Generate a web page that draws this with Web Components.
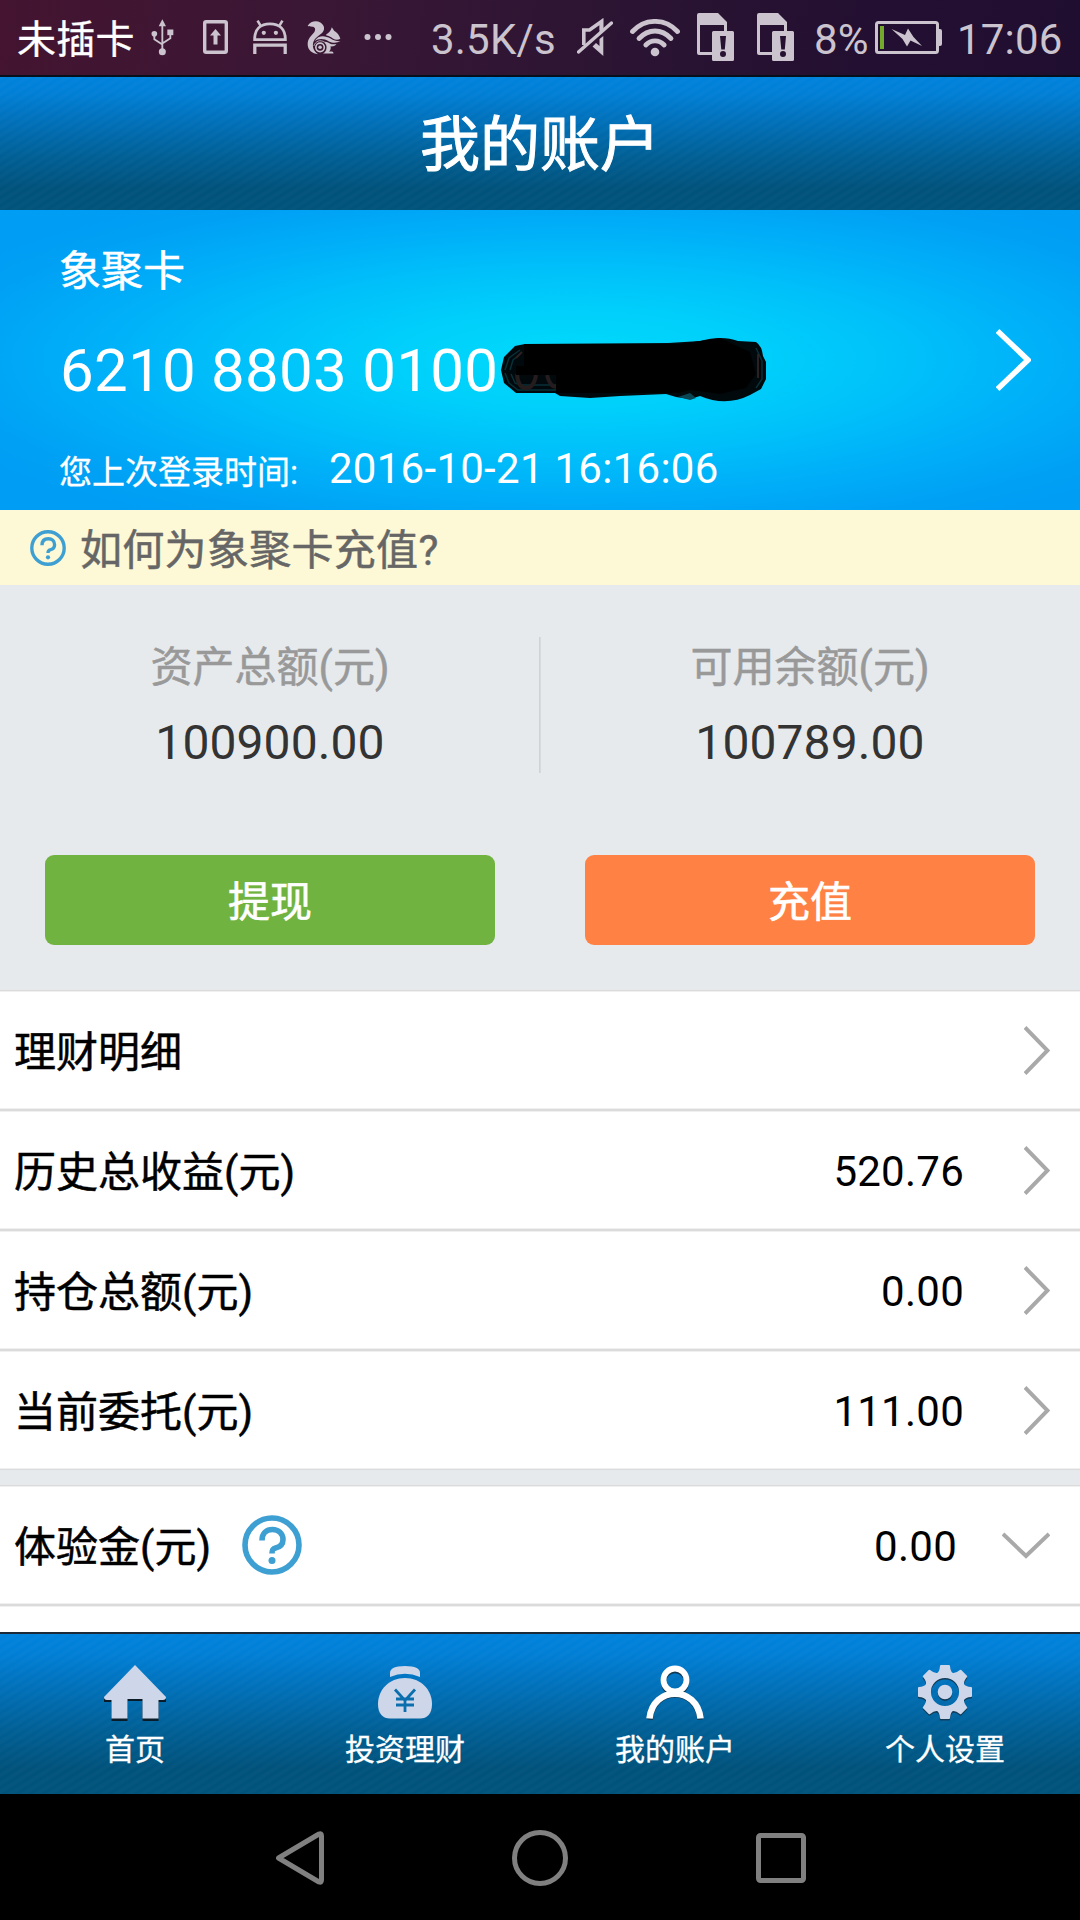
<!DOCTYPE html>
<html lang="zh-CN">
<head>
<meta charset="UTF-8">
<title>我的账户</title>
<style>
  html, body { margin: 0; padding: 0; }
  body {
    width: 1080px;
    height: 1920px;
    overflow: hidden;
    font-family: Roboto, "Noto Sans CJK SC", sans-serif;
    background: #e6eaed;
    --bar-bg:
      repeating-linear-gradient(var(--stripe-angle, 148deg), rgba(255,255,255,.02) 0 2px, rgba(255,255,255,0) 4px 5px, rgba(255,255,255,.02) 7px),
      linear-gradient(#0082dc 0, #007fd6 12%, #0071bb 32%, #005f95 60%, #00527b 84%, #00537b 100%);
  }
</style>
</head>
<body>
<app-screen>
  <status-bar carrier="未插卡" speed="3.5K/s" battery="8%" time="17:06"></status-bar>
  <title-bar>我的账户</title-bar>
  <account-card name="象聚卡" number="6210 8803 0100" label="您上次登录时间:" time="2016-10-21 16:16:06"></account-card>
  <tip-bar>如何为象聚卡充值?</tip-bar>
  <balance-panel>
    <balance-item label="资产总额(元)">100900.00</balance-item>
    <balance-item label="可用余额(元)">100789.00</balance-item>
    <action-button slot="actions" color="#71b340">提现</action-button>
    <action-button slot="actions" color="#ff8144">充值</action-button>
  </balance-panel>
  <list-group>
    <list-row label="理财明细"></list-row>
    <list-row label="历史总收益(元)">520.76</list-row>
    <list-row label="持仓总额(元)">0.00</list-row>
    <list-row label="当前委托(元)">111.00</list-row>
  </list-group>
  <list-group last>
    <list-row label="体验金(元)" help expand>0.00</list-row>
    <list-row label=""></list-row>
  </list-group>
  <tab-bar slot="footer">
    <tab-item icon="home">首页</tab-item>
    <tab-item icon="bag">投资理财</tab-item>
    <tab-item icon="user">我的账户</tab-item>
    <tab-item icon="gear">个人设置</tab-item>
  </tab-bar>
  <nav-bar slot="footer"></nav-bar>
</app-screen>

<script>
(function () {
  'use strict';

  function define(name, template) {
    customElements.define(name, class extends HTMLElement {
      constructor() {
        super();
        this.attachShadow({ mode: 'open' });
      }

      connectedCallback() {
        this.shadowRoot.innerHTML = template(this);
      }
    });
  }

  const attr = (el, name) => el.getAttribute(name) || '';

  const HELP = `
    <svg viewBox="0 0 60 60" fill="none" stroke="#3d9fd2">
      <circle cx="30" cy="30" r="27" stroke-width="5.600"/>
      <path d="M20 25.5C20 18 24.500 14.500 30.500 14.500S41 18.500 41 24.500c0 5.500-3 7.500-7.500 8.500-2.500.6-3.500 1.500-3.500 5.500" stroke-width="5.600"/>
      <circle cx="30" cy="45.500" r="3.500" fill="#3d9fd2" stroke="none"/>
    </svg>`;

  // status bar glyphs
  const USB = `
    <svg class="usb" viewBox="32 38 69 110" fill="#cbc3cd" stroke="#cbc3cd">
      <path d="M66 38L77 59H55Z" stroke="none"/>
      <path d="M66 55V136M42 84V98L66 114M90 80V95L66 111" fill="none" stroke-width="5.500"/>
      <circle cx="42" cy="82" r="8.500" stroke="none"/>
      <path d="M81 69H99V86H81Z" stroke="none"/>
      <circle cx="66" cy="136" r="10.500" stroke="none"/>
    </svg>`;

  const UPLOAD = `
    <svg class="upload" viewBox="0 0 25 34" fill="none" stroke="#cbc3cd">
      <rect x="1.700" y="1.700" width="21.600" height="30.600" rx="1.500" stroke-width="3.400"/>
      <path d="M12.500 9L18 15.500H14.500V24.500H10.500V15.500H7Z" fill="#cbc3cd" stroke="none"/>
    </svg>`;

  const DROID = `
    <svg class="droid" viewBox="339 40 102 104" fill="none" stroke="#cbc3cd" stroke-width="8.500">
      <path d="M343 100C343 68 361 52 390 52S437 68 437 100Z"/>
      <path d="M361 57L352 42M419 57L428 42" stroke-width="8"/>
      <path d="M343.500 144V117H436.500V144" stroke-width="10"/>
      <circle cx="371" cy="79" r="6.500" fill="#cbc3cd" stroke="none"/>
      <circle cx="408" cy="79" r="6.500" fill="#cbc3cd" stroke="none"/>
    </svg>`;

  const SQUIRREL = `
    <svg class="squirrel" viewBox="500 41 104 104" fill="#cbc3cd">
      <path d="M502 57C511 43 528 40 541 47C555 56 555 70 546 79C533 90 519 96 518 116C518 130 526 139 534 144C516 143 502 132 502 114C502 95 514 88 522 77C528 67 524 60 516 60C510 59 506 59 502 57Z"/>
      <path d="M559 83C566 80 573 74 576 62L583 72C592 77 599 86 602 97C595 101 587 101 579 96C572 91 566 88 559 87Z"/>
      <path d="M523 104C535 84 556 87 572 96C582 102 592 105 602 104C592 111 577 110 567 105C550 95 535 96 523 104Z"/>
      <path d="M553 106C561 105 566 110 573 113C580 115 585 113 590 113C585 120 577 121 572 120C574 128 571 134 567 136H576C579 136 581 139 581 142H549C562 136 566 119 553 106Z"/>
      <circle cx="540" cy="123" r="13" fill="none" stroke="#cbc3cd" stroke-width="5"/>
      <circle cx="540" cy="123" r="5.500"/>
      <path d="M521 119C526 103 541 99 553 107C562 114 564 127 557 136" fill="none" stroke="#cbc3cd" stroke-width="2.500"/>
    </svg>`;

  const DOTS = `
    <svg class="dots" viewBox="0 0 28 8" fill="#cbc3cd">
      <circle cx="3.500" cy="4" r="3"/><circle cx="14" cy="4" r="3"/><circle cx="24.500" cy="4" r="3"/>
    </svg>`;

  const MUTE = `
    <svg class="mute" viewBox="0 0 36 38" fill="none" stroke="#cbc3cd">
      <path d="M6.800 27V12H12.500L24.500 3.500V12" stroke-width="3.600"/>
      <path d="M26.300 18V38L15.500 28.500L19 25L22.500 28V21Z" fill="#cbc3cd" stroke="none"/>
      <path d="M26.300 0V12L22.500 15V7Z" fill="#cbc3cd" stroke="none"/>
      <path d="M1.500 34L34.500 5" stroke-width="3.400" stroke-linecap="round"/>
    </svg>`;

  const WIFI = `
    <svg class="wifi" viewBox="0 0 50 38" fill="none" stroke="#cbc3cd" stroke-width="4.800" stroke-linecap="round">
      <path d="M2.500 12.500C15-1 35-1 47.500 12.500"/>
      <path d="M9 19.500C18.500 9.500 31.500 9.500 41 19.500"/>
      <path d="M15.800 26C21 20.500 29 20.500 34.200 26"/>
      <circle cx="25" cy="33" r="4.300" fill="#cbc3cd" stroke="none"/>
    </svg>`;

  const SIM = `
    <svg class="sim" viewBox="0 0 37 48" fill="#cbc3cd">
      <path d="M2 0H21L30 9V18H27V12H3V39H15V42H2Q0 42 0 40V2Q0 0 2 0Z"/>
      <path fill-rule="evenodd" d="M16.500 18H35.500Q37 18 37 19.500V46.500Q37 48 35.500 48H16.500Q15 48 15 46.500V19.500Q15 18 16.500 18ZM23 23L24.300 36.500H27.800L29 23ZM26 38A3 3 0 1 0 26 44A3 3 0 1 0 26 38Z"/>
    </svg>`;

  const BATTERY = `
    <svg class="battery" viewBox="0 0 67 33" fill="none">
      <rect x="1.500" y="1.500" width="61" height="30" rx="2" stroke="#cbc3cd" stroke-width="3"/>
      <path d="M63 8H65Q67 8 67 10V23Q67 25 65 25H63Z" fill="#cbc3cd"/>
      <rect x="5" y="5" width="4" height="23" fill="#73aa2c"/>
      <path d="M16.500 8L30 14L33 7.500L38.500 16L47 25L35.500 19.500L32 25.500L27.500 18Z" fill="#cbc3cd"/>
    </svg>`;

  const TABS = {
    home: `
      <svg width="62" height="56" viewBox="0 0 62 56">
        <path d="M31 1L62 33V36H54.500V55H38.500V35H23.500V55H7.500V36H0V33Z" fill="#0a1c28" transform="translate(0 1)"/>
        <path d="M31 0L62 32Q62 35 59 35H54.500V53.500H38.500V34H23.500V53.500H7.500V35H3Q0 35 0 32Z" fill="#ced6ea"/>
      </svg>`,
    bag: `
      <svg width="54" height="56" viewBox="0 0 54 56">
        <path d="M12 12V8Q12 1 27 1T42 8V12Q27 5.500 12 12Z" fill="#ced6ea"/>
        <path d="M27 13C43 13 54 25 54 39C54 49 49 53.500 42 53.500H12C5 53.500 0 49 0 39C0 25 11 13 27 13Z" fill="#ced6ea"/>
        <path d="M17 24.500L27 35.500L37 24.500M27 35V47M18 34H36M18 40H36" fill="none" stroke="#0b6fae" stroke-width="2.800"/>
      </svg>`,
    user: `
      <svg width="58" height="56" viewBox="0 0 58 56" fill="none">
        <g stroke="#12384f" transform="translate(0 1.800)"><circle cx="29" cy="15.500" r="11.500" stroke-width="5"/><path d="M4 53C7 20 51 20 54 53" stroke-width="5.500"/></g>
        <g stroke="#fff"><circle cx="29" cy="15" r="11.500" stroke-width="5.800"/><path d="M3.500 53.500C7 20.500 51 20.500 54.500 53.500" stroke-width="6.500"/></g>
      </svg>`,
    gear: (function () {
      const tooth = 'M-7.500-18Q-4.500-20-4-26H4Q4.500-20 7.500-18Z';
      let teeth = '';
      for (let a = 0; a < 360; a += 45) teeth += `<path d="${tooth}" transform="rotate(${a})"/>`;
      const body = `${teeth}<circle r="17.300" fill="none" stroke-width="6.500"/><circle r="6.300"/>`;
      return `
      <svg width="56" height="56" viewBox="-28 -27 56 56">
        <g fill="#123c58" stroke="#123c58" stroke-width="2" stroke-linejoin="round" transform="translate(0 1.600)">${body}</g>
        <g fill="#ced6ea" stroke="#ced6ea" stroke-width="2" stroke-linejoin="round">${body}</g>
      </svg>`;
    })()
  };

  define('app-screen', () => `
    <style>
      :host { display: flex; flex-direction: column; width: 1080px; height: 1920px; }
      main { flex: 1; min-height: 0; overflow: hidden; }
    </style>
    <main><slot></slot></main>
    <slot name="footer"></slot>`);

  define('status-bar', (el) => `
    <style>
      :host {
        display: flex;
        align-items: flex-start;
        height: 77px;
        box-sizing: border-box;
        border-bottom: 2px solid #06101c;
        background: linear-gradient(97deg, #441430 0, #3a1735 28%, #2b1433 58%, #230f31 80%, #200e30 100%);
        color: #cbc3cd;
        font-size: 42px;
        line-height: 42px;
        letter-spacing: .2px;
        white-space: nowrap;
      }
      svg { flex: none; display: block; }
      span { margin-top: 19px; }
      .carrier { width: 134px; box-sizing: border-box; padding-left: 17px; margin-top: 21px; font-size: 39px; line-height: 39px; color: #fff; -webkit-text-stroke: .3px #fff; }
      .usb { width: 23px; height: 37px; margin: 19px 0 0 17px; }
      .upload { width: 25px; height: 34px; margin: 20px 0 0 29px; }
      .droid { width: 34px; height: 34px; margin: 20px 0 0 25px; }
      .squirrel { width: 34px; height: 35px; margin: 20px 0 0 20px; }
      .dots { width: 28px; height: 8px; margin: 33px 0 0 23px; }
      .speed { width: 125px; margin-left: 39px; }
      .mute { width: 36px; height: 38px; margin: 18px 0 0 21px; }
      .wifi { width: 50px; height: 38px; margin: 19px 0 0 17px; }
      .sim { width: 37px; height: 48px; margin: 13px 0 0 17px; }
      .sim + .sim { margin-left: 23px; }
      .level { width: 54px; margin-left: 20px; }
      .battery { width: 67px; height: 33px; margin: 21px 0 0 7px; }
      .time { margin-left: 15px; }
    </style>
    <span class="carrier">${attr(el, 'carrier')}</span>
    ${USB}${UPLOAD}${DROID}${SQUIRREL}${DOTS}
    <span class="speed">${attr(el, 'speed')}</span>
    ${MUTE}${WIFI}${SIM}${SIM}
    <span class="level">${attr(el, 'battery')}</span>
    ${BATTERY}
    <span class="time">${attr(el, 'time')}</span>`);

  define('title-bar', () => `
    <style>
      :host {
        display: flex;
        justify-content: center;
        align-items: center;
        height: 133px;
        box-sizing: border-box;
        padding-top: 4px;
        background: var(--bar-bg);
        color: #fff;
        font-size: 60px;
        line-height: 60px;
        -webkit-text-stroke: 1px #fff;
      }
    </style>
    <slot></slot>`);

  define('account-card', (el) => `
    <style>
      :host {
        display: flex;
        justify-content: space-between;
        align-items: flex-start;
        height: 300px;
        box-sizing: border-box;
        padding: 41px 49px 0 60px;
        background: radial-gradient(ellipse 700px 190px at 53% 50%, #00dafb 0, #00d0fb 25%, #00bffa 50%, #00adf8 72%, #00a2f5 88%, #009df4 100%);
        color: #fff;
      }
      .name { margin-left: -1px; font-size: 42px; line-height: 42px; -webkit-text-stroke: .5px #fff; }
      .number { display: flex; margin-top: 48px; height: 60px; font-size: 60px; line-height: 60px; letter-spacing: .27px; white-space: pre; }
      .mask { width: 267px; height: 68px; margin: -5px 0 0 2px; }
      .login { display: flex; margin-top: 47px; font-size: 42px; line-height: 42px; letter-spacing: .27px; }
      .login span { width: 270px; margin-left: -1px; font-size: 33px; padding-top: 4px; letter-spacing: 0; -webkit-text-stroke: .3px #fff; }
      .arrow { width: 35px; height: 62px; margin-top: 78px; }
    </style>
    <div>
      <div class="name">${attr(el, 'name')}</div>
      <div class="number">${attr(el, 'number')}<svg class="mask" viewBox="0 0 267 68" fill="none">
          <path d="M1 34L4 21L15 10L25 8L168 7L200 5Q222-1 238 5L256 6Q262 10 263 20L266 26V43L261 53L250 59Q226 71 200 60L190 63L176 61L166 58L120 60L90 62L60 60L55 57H16L4 47Z" fill="#02090c"/>
          <path d="M5 34L9 22L20 14M5 37L9 47L18 54H56M10 34L13 24L20 18M11 38L15 47L20 49H56M256 12L262 25V43L256 52" stroke="#083038" stroke-width="1.500"/>
          <path d="M17 38Q18 52 26 52T36 39M47 39Q50 51 56 51" stroke="#251c1e" stroke-width="4"/>
          <path d="M16 22L22 16M258 18V42" stroke="#2c2022" stroke-width="2"/>
          <path d="M24 8H180L220 2L250 16L256 38L246 52L220 58L190 54L178 57H56V39H16V30H24Z" fill="#000"/>
          <path d="M178 61L190 57L196 62L190 64Z" fill="#0a4654"/>
        </svg></div>
      <div class="login"><span>${attr(el, 'label')}</span>${attr(el, 'time')}</div>
    </div>
    <svg class="arrow" viewBox="0 0 35 62"><path d="M1.500 2L32 31L1.500 60" fill="none" stroke="#fff" stroke-width="5.500"/></svg>`);

  define('tip-bar', () => `
    <style>
      :host {
        display: flex;
        align-items: flex-start;
        height: 75px;
        box-sizing: border-box;
        padding: 20px 30px 0;
        background: #fdf8d5;
        color: #666;
        font-size: 42px;
        line-height: 42px;
        letter-spacing: .3px;
        -webkit-text-stroke: .5px #666;
      }
      svg { width: 36px; height: 36px; margin-right: 14px; }
    </style>
    ${HELP}<slot></slot>`);

  define('balance-panel', () => `
    <style>
      :host { display: block; height: 405px; background: #e6eaed; }
      .items { display: flex; height: 136px; padding: 52px 0 82px; }
      .items ::slotted(balance-item) { flex: 1; }
      .items ::slotted(balance-item:nth-child(2)) { box-shadow: -1px 0 #d0d3d6, inset 1px 0 #d8dbdd; }
      .actions { display: grid; grid-template-columns: 1fr 1fr; gap: 90px; padding: 0 45px; }
    </style>
    <div class="items"><slot></slot></div>
    <div class="actions"><slot name="actions"></slot></div>`);

  define('balance-item', (el) => `
    <style>
      :host { display: flex; flex-direction: column; align-items: center; gap: 30px; padding-top: 10px; box-sizing: border-box; }
      .label { font-size: 42px; line-height: 42px; color: #999; -webkit-text-stroke: .5px #999; }
      .value { font-size: 48px; line-height: 48px; color: #333; letter-spacing: .1px; }
    </style>
    <div class="label">${attr(el, 'label')}</div>
    <div class="value"><slot></slot></div>`);

  define('action-button', (el) => `
    <style>
      :host {
        display: flex;
        align-items: center;
        justify-content: center;
        height: 90px;
        box-sizing: border-box;
        padding-top: 5px;
        border-radius: 9px;
        background: ${attr(el, 'color')};
        color: #fff;
        font-size: 42px;
        line-height: 42px;
        -webkit-text-stroke: .6px #fff;
      }
    </style>
    <slot></slot>`);

  define('list-group', () => `
    <style>
      :host { display: block; padding-bottom: 15px; }
      :host([last]) { padding-bottom: 0; }
    </style>
    <slot></slot>`);

  define('list-row', (el) => {
    const expand = el.hasAttribute('expand');
    return `
    <style>
      :host {
        display: flex;
        align-items: center;
        height: 120px;
        box-sizing: border-box;
        padding: 0 30px 0 14px;
        border: solid #dbdbdb;
        border-width: 1px 0;
        background: #fff;
        box-shadow: inset 0 1px #f0f0f0, inset 0 -1px #f0f0f0;
        color: #000;
        font-size: 42px;
        line-height: 42px;
      }
      .label { padding-top: 5px; -webkit-text-stroke: .5px #000; }
      .help { width: 60px; height: 60px; margin-left: 31px; }
      .help svg { display: block; }
      .value { margin-left: auto; padding-top: 4px; letter-spacing: .25px; }
      .arrow { width: 26px; height: 49px; margin-left: 60px; }
      .arrow.down { width: 48px; height: 27px; margin-left: 45px; }
    </style>
    <span class="label">${attr(el, 'label')}</span>
    ${el.hasAttribute('help') ? `<span class="help">${HELP}</span>` : ''}
    <span class="value"><slot></slot></span>
    ${expand
      ? '<svg class="arrow down" viewBox="0 0 48 27"><path d="M1 2L24 24L47 2" fill="none" stroke="#a9a9a9" stroke-width="4"/></svg>'
      : '<svg class="arrow" viewBox="0 0 26 49"><path d="M1 1.500L23.500 24.500L1 47.500" fill="none" stroke="#a9a9a9" stroke-width="4"/></svg>'}`;
  });

  define('tab-bar', () => `
    <style>
      :host {
        --stripe-angle: 138deg;
        display: grid;
        grid-template-columns: repeat(4, 1fr);
        height: 162px;
        box-sizing: border-box;
        border-top: 2px solid #1b2a36;
        background: var(--bar-bg);
      }
    </style>
    <slot></slot>`);

  define('tab-item', (el) => `
    <style>
      :host {
        display: flex;
        flex-direction: column;
        align-items: center;
        padding-top: 31px;
        color: #fff;
        font-size: 30px;
        line-height: 30px;
        -webkit-text-stroke: .3px #fff;
      }
      svg { display: block; margin-bottom: 14px; }
    </style>
    ${TABS[attr(el, 'icon')]}
    <slot></slot>`);

  define('nav-bar', () => `
    <style>
      :host {
        display: flex;
        justify-content: center;
        align-items: center;
        gap: 188px;
        height: 126px;
        box-sizing: border-box;
        padding: 2px 0 0 1px;
        background: #000;
      }
      svg { fill: none; stroke: #808080; stroke-width: 5; stroke-linejoin: round; }
    </style>
    <svg width="48" height="54" viewBox="0 0 48 54"><path d="M2.500 27L43 3Q45.500 2 45.500 5V49Q45.500 52 43 51Z"/></svg>
    <svg width="56" height="56" viewBox="0 0 56 56"><circle cx="28" cy="28" r="25.500"/></svg>
    <svg width="50" height="50" viewBox="0 0 50 50"><rect x="2.500" y="2.500" width="45" height="45" rx="2"/></svg>`);
})();
</script>
</body>
</html>
